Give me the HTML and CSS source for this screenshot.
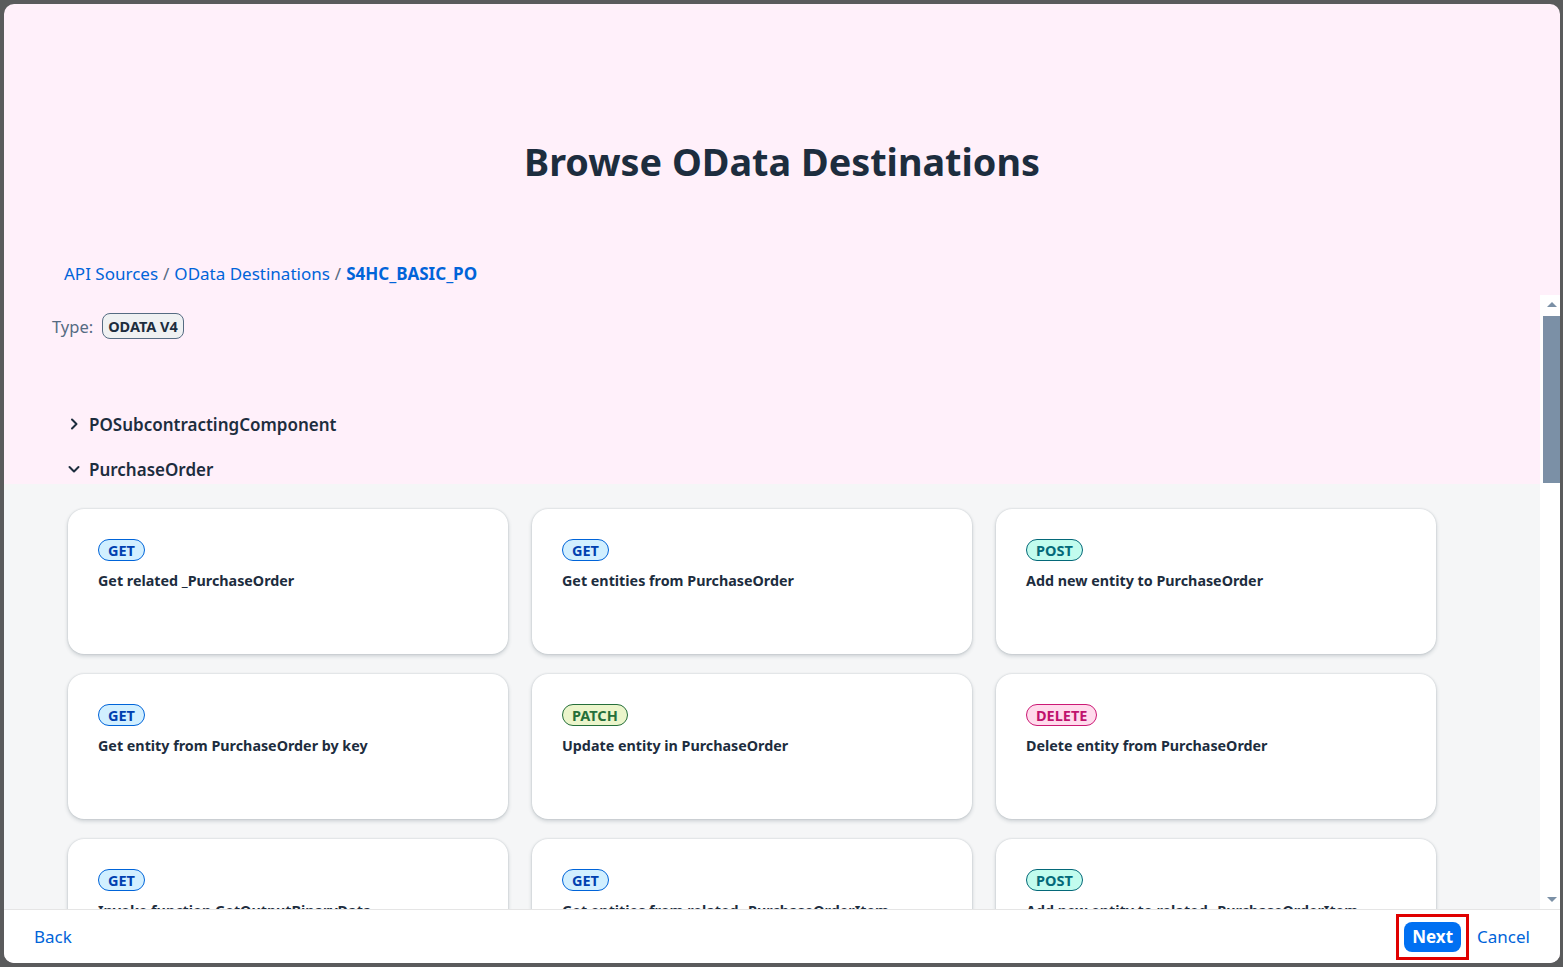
FILE: index.html
```html
<!DOCTYPE html>
<html lang="en">
<head>
<meta charset="utf-8">
<title>Browse OData Destinations</title>
<link rel="stylesheet" href="styles.css">
</head>
<body>
<div class="dialog">
  <header class="head">
    <h1 class="title">Browse OData Destinations</h1>
    <nav class="crumbs">
      <a class="crumb">API Sources</a><span class="sep">/</span><a class="crumb">OData Destinations</a><span class="sep">/</span><span class="crumb current">S4HC_BASIC_PO</span>
    </nav>
  </header>
  <div class="body">
    <div class="scroll">
      <div class="type-row">
        <span class="type-label">Type:</span>
        <span class="type-badge">ODATA V4</span>
      </div>
      <div class="tree">
        <div class="tree-item">
          <svg class="chev" viewBox="0 0 12 12" width="12" height="12"><path d="M4 1.5 L8.5 6 L4 10.5" fill="none" stroke="#1d2d3e" stroke-width="2" stroke-linecap="round" stroke-linejoin="round"/></svg>
          <span>POSubcontractingComponent</span>
        </div>
        <div class="tree-item">
          <svg class="chev" viewBox="0 0 12 12" width="12" height="12"><path d="M1.5 4 L6 8.5 L10.5 4" fill="none" stroke="#1d2d3e" stroke-width="2" stroke-linecap="round" stroke-linejoin="round"/></svg>
          <span>PurchaseOrder</span>
        </div>
      </div>
      <div class="ops">
        <div class="grid">
          <div class="card"><span class="m m-get">GET</span><div class="op">Get related _PurchaseOrder</div></div>
          <div class="card"><span class="m m-get">GET</span><div class="op">Get entities from PurchaseOrder</div></div>
          <div class="card"><span class="m m-post">POST</span><div class="op">Add new entity to PurchaseOrder</div></div>
          <div class="card"><span class="m m-get">GET</span><div class="op">Get entity from PurchaseOrder by key</div></div>
          <div class="card"><span class="m m-patch">PATCH</span><div class="op">Update entity in PurchaseOrder</div></div>
          <div class="card"><span class="m m-delete">DELETE</span><div class="op">Delete entity from PurchaseOrder</div></div>
          <div class="card"><span class="m m-get">GET</span><div class="op">Invoke function GetOutputBinaryData</div></div>
          <div class="card"><span class="m m-get">GET</span><div class="op">Get entities from related _PurchaseOrderItem</div></div>
          <div class="card"><span class="m m-post">POST</span><div class="op">Add new entity to related _PurchaseOrderItem</div></div>
        </div>
      </div>
    </div>
    <div class="scrollbar">
      <div class="arrow up"></div>
      <div class="thumb"></div>
      <div class="track"></div>
      <div class="arrow down"></div>
    </div>
  </div>
  <footer class="foot">
    <a class="link">Back</a>
    <div class="actions">
      <span class="focus-box"><button class="btn-next">Next</button></span>
      <a class="link">Cancel</a>
    </div>
  </footer>
</div>
</body>
</html>
```
FILE: styles.css
```css
html, body {
  margin: 0;
  padding: 0;
  height: 100%;
}
body {
  background: #5a5b5c;
  font-family: "Noto Sans", "Liberation Sans", sans-serif;
  color: #1d2d3e;
  overflow: hidden;
}
.dialog {
  position: absolute;
  left: 4px;
  top: 4px;
  width: 1556px;
  height: 959px;
  background: #fff0fa;
  border-radius: 10px;
  overflow: hidden;
  display: flex;
  flex-direction: column;
}
.head {
  height: 291px;
  flex: none;
  display: flex;
  flex-direction: column;
}
.title {
  margin: 134px 0 0;
  text-align: center;
  font-size: 37.8px;
  line-height: 48px;
  font-weight: 700;
  color: #1d2d3e;
}
.crumbs {
  margin: 76px 0 0 60px;
  font-size: 17px;
  line-height: 24px;
  color: #0064d9;
}
.crumb { color: #0064d9; }
.sep { color: #556b82; margin: 0 5px; }
.current { font-weight: 700; }
.body {
  flex: 1;
  display: flex;
  min-height: 0;
}
.scroll {
  flex: 1;
  overflow: hidden;
  display: flex;
  flex-direction: column;
}
.type-row {
  display: flex;
  align-items: center;
  gap: 9px;
  padding: 18px 0 0 48px;
}
.type-label {
  color: #556b82;
  font-size: 16.5px;
}
.type-badge {
  height: 24px;
  line-height: 24px;
  padding: 0 5px;
  border: 1px solid #556b82;
  border-radius: 8px;
  background: #eff1f2;
  font-size: 14.5px;
  font-weight: 700;
  color: #1d2d3e;
}
.tree {
  margin-top: 70px;
  padding-left: 64px;
  display: flex;
  flex-direction: column;
  gap: 15px;
}
.tree-item {
  height: 30px;
  display: flex;
  align-items: center;
  gap: 9px;
  font-size: 17px;
  font-weight: 600;
}
.chev { flex: none; }
.ops {
  flex: 1;
  background: #f5f6f7;
  padding: 25px 0 0 64px;
}
.grid {
  display: grid;
  grid-template-columns: repeat(3, 440px);
  column-gap: 24px;
  row-gap: 20px;
}
.card {
  height: 145px;
  box-sizing: border-box;
  background: #fff;
  border-radius: 16px;
  box-shadow: 0 0 2px rgba(34, 53, 72, 0.2), 0 2px 4px rgba(34, 53, 72, 0.2);
  padding: 30px 30px;
}
.m {
  display: inline-block;
  height: 20px;
  line-height: 20px;
  padding: 0 9px;
  border: 1px solid;
  border-radius: 11px;
  font-size: 14.5px;
  font-weight: 700;
}
.m-get { background: #d1efff; border-color: #0064d9; color: #0040b0; }
.m-post { background: #c2fcee; border-color: #046979; color: #046979; }
.m-patch { background: #ebf5cb; border-color: #256f3a; color: #256f3a; }
.m-delete { background: #ffdbec; border-color: #cc1975; color: #c0126d; }
.op {
  margin-top: 10px;
  font-size: 14.3px;
  line-height: 20px;
  font-weight: 700;
  color: #1d2d3e;
}
.scrollbar {
  width: 20px;
  flex: none;
  background: #fff;
  display: flex;
  flex-direction: column;
  align-items: flex-end;
}
.arrow {
  width: 17px;
  height: 21px;
  position: relative;
}
.arrow::after {
  content: "";
  position: absolute;
  left: 4px;
  border-left: 5px solid transparent;
  border-right: 5px solid transparent;
}
.arrow.up::after { top: 7px; border-bottom: 5px solid #7b90a6; }
.arrow.down::after { top: 9px; border-top: 5px solid #7b90a6; }
.thumb {
  width: 17px;
  height: 167px;
  background: #7b90a6;
  flex: none;
}
.track { flex: 1; }
.foot {
  height: 53px;
  flex: none;
  background: #fff;
  border-top: 1px solid #e5e5e5;
  display: flex;
  align-items: center;
  justify-content: space-between;
  padding: 0 30px;
}
.link {
  color: #0064d9;
  font-size: 17px;
}
.actions {
  display: flex;
  align-items: center;
  gap: 8px;
}
.focus-box {
  display: flex;
  padding: 5px;
  border: 3px solid #e00000;
}
.btn-next {
  height: 30px;
  padding: 0 8px;
  border: none;
  border-radius: 8px;
  background: #0070f2;
  color: #fff;
  font-family: inherit;
  font-size: 17px;
  font-weight: 700;
}
```
